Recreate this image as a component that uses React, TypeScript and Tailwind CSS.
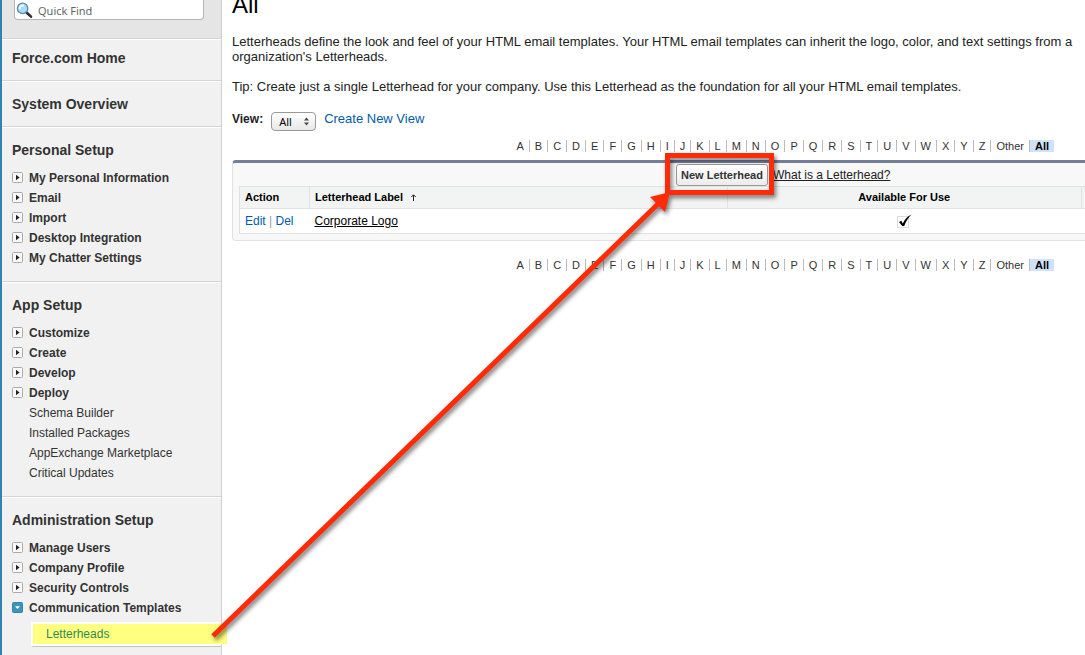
import { ReactNode, useState } from 'react';
import clsx from 'clsx';

type MenuItem = {
  label: string;
  kind?: 'leaf' | 'open';
};

const LETTERS = [...'ABCDEFGHIJKLMNOPQRSTUVWXYZ', 'Other'];

const personalSetup: MenuItem[] = [
  { label: 'My Personal Information' },
  { label: 'Email' },
  { label: 'Import' },
  { label: 'Desktop Integration' },
  { label: 'My Chatter Settings' },
];

const appSetup: MenuItem[] = [
  { label: 'Customize' },
  { label: 'Create' },
  { label: 'Develop' },
  { label: 'Deploy' },
  { label: 'Schema Builder', kind: 'leaf' },
  { label: 'Installed Packages', kind: 'leaf' },
  { label: 'AppExchange Marketplace', kind: 'leaf' },
  { label: 'Critical Updates', kind: 'leaf' },
];

const adminSetup: MenuItem[] = [
  { label: 'Manage Users' },
  { label: 'Company Profile' },
  { label: 'Security Controls' },
  { label: 'Communication Templates', kind: 'open' },
];

function Toggle({ open }: { open: boolean }) {
  return (
    <svg className="mb-px size-[11px] shrink-0" viewBox="0 0 11 11" aria-hidden="true">
      <rect
        x="0.5"
        y="0.5"
        width="10"
        height="10"
        rx="1"
        fill={open ? '#3f94bb' : '#f8f8f8'}
        stroke={open ? '#2f84ab' : '#a9a9a9'}
      />
      {open ? (
        <path d="M3 4.2h5L5.5 7z" fill="#fff" />
      ) : (
        <path d="M4 2.8v5.4L7.6 5.5z" fill="#222" />
      )}
    </svg>
  );
}

function Magnifier() {
  return (
    <svg className="absolute top-[2px] left-[2px] size-[17px]" viewBox="0 0 17 17" aria-hidden="true">
      <path d="M10.8 10.8l4.2 3.8" stroke="#2b2b33" strokeWidth="2.6" strokeLinecap="round" />
      <circle cx="6.6" cy="6.4" r="5.2" fill="#a9dcf8" stroke="#5b87b0" strokeWidth="1.3" />
      <path d="M3.6 6.4a3.3 3.3 0 0 1 3.6-3" stroke="#eefaff" strokeWidth="2" fill="none" strokeLinecap="round" />
    </svg>
  );
}

function Section({ title, items, children }: { title: string; items?: MenuItem[]; children?: ReactNode }) {
  return (
    <section className="border-t border-b border-t-white border-b-[#d4d4d4] pt-3 pb-3 pl-[10px] last:border-b-0">
      <h2 className="text-sm leading-5 font-bold">{title}</h2>
      {items && (
        <ul className="mt-2 mb-px">
          {items.map((item) => (
            <li key={item.label} className="flex h-5 items-center gap-[6px]">
              {item.kind === 'leaf' ? <span className="w-[11px]" /> : <Toggle open={item.kind === 'open'} />}
              <a href="#" className={clsx('text-[12px] leading-5', item.kind !== 'leaf' && 'font-bold')}>
                {item.label}
              </a>
            </li>
          ))}
        </ul>
      )}
      {children}
    </section>
  );
}

function Rolodex({ label }: { label: string }) {
  return (
    <nav aria-label={label} className="flex justify-end pr-[31px] text-[11px] leading-3 text-[#333]">
      {LETTERS.map((letter) => (
        <a key={letter} href="#" className="border-r border-[#bbb] px-[5px]">
          {letter}
        </a>
      ))}
      <a href="#" className="bg-[#cfe2fb] px-[5px] font-bold text-black">
        All
      </a>
    </nav>
  );
}

// Red frame round the button, and the arrow that leads to it from the menu
function Callout() {
  return (
    <svg className="pointer-events-none absolute top-0 -left-0.5 size-full overflow-visible" aria-hidden="true">
      <g style={{ filter: 'drop-shadow(2px 3px 2px rgb(0 0 0 / 0.5))' }}>
        <rect x="667.5" y="155.5" width="104" height="37" fill="none" stroke="#ff2b06" strokeWidth="5" />
        <path d="M213 636L659 203" stroke="#ff2b06" strokeWidth="5" fill="none" />
        <path d="M650 197l20-5-5 20z" fill="#ff2b06" />
      </g>
    </svg>
  );
}

export default function App() {
  const [quickFind, setQuickFind] = useState('');

  return (
    <div
      className="relative flex min-h-screen overflow-hidden border-l-2 border-[#2f84ab] bg-white text-[#222]"
      style={{ fontFamily: '"Liberation Sans", Arial, sans-serif' }}
    >
      <aside className="flex w-[220px] shrink-0 flex-col border-r border-[#cfcfcf] bg-[#f1f1f1] text-[#333]">
        <div className="border-b border-[#d4d4d4] bg-[#e5e5e5] pr-[17px] pb-[18px] pl-3">
          <div className="relative">
            <input
              type="text"
              aria-label="Quick Find"
              placeholder="Quick Find"
              value={quickFind}
              onChange={(event) => setQuickFind(event.target.value)}
              className="block h-5 w-full rounded-b border border-t-0 border-[#b5b5b5] bg-white pt-[2px] pl-[23px] font-['Noto_Sans',sans-serif] text-[11px] placeholder:text-[#666]"
            />
            <Magnifier />
          </div>
        </div>
        <section className="border-t border-b border-t-white border-b-[#d4d4d4] pt-2 pb-3 pl-[10px]">
          <h2 className="text-sm leading-5 font-bold">Force.com Home</h2>
        </section>
        <Section title="System Overview" />
        <Section title="Personal Setup" items={personalSetup} />
        <Section title="App Setup" items={appSetup} />
        <Section title="Administration Setup" items={adminSetup}>
          <div className="relative ml-[19px] pt-[3px]">
            <div className="border-t-2 border-b border-l-2 border-white border-b-[#c4c4c4] bg-white pb-[2px]">
              <a href="#" className="-mr-[6px] block bg-[#ffff80] pl-[13px] text-[12px] leading-5 text-[#2e8b57]">
                Letterheads
              </a>
            </div>
          </div>
        </Section>
      </aside>

      <main className="min-w-0 flex-1 pl-[10px]">
        <h1 className="-mt-[3px] text-2xl leading-4 text-black">All</h1>
        <div className="mt-[21px] text-[13px] leading-[15px] whitespace-nowrap">
          <p>
            Letterheads define the look and feel of your HTML email templates. Your HTML email templates can inherit the logo, color, and text settings from a
            <br />
            organization's Letterheads.
          </p>
          <p className="mt-[15px]">
            Tip: Create just a single Letterhead for your company. Use this Letterhead as the foundation for all your HTML email templates.
          </p>
        </div>

        <div className="mt-[18px] flex items-start text-[12px] leading-[14px]">
          <label htmlFor="view" className="mr-2 font-bold">
            View:
          </label>
          <div className="relative">
            <select
              id="view"
              className="block h-[19px] w-[45px] appearance-none rounded border border-[#999] bg-linear-to-b from-white to-[#e8e8e8] pl-[7px] font-['Noto_Sans',sans-serif] text-[11px] text-black"
            >
              <option>All</option>
            </select>
            <svg className="pointer-events-none absolute top-[5px] right-[6px] h-[9px] w-[7px]" viewBox="0 0 7 9" aria-hidden="true">
              <path d="M1 3.4L3.5 0.4 6 3.4zM1 5.6l2.5 3 2.5-3z" fill="#444" />
            </svg>
          </div>
          <a href="#" className="ml-2 text-[13px] text-[#015ba7]">
            Create New View
          </a>
        </div>

        <div className="mt-[9px] mb-2">
          <Rolodex label="Filter by letter" />
        </div>

        <div className="rounded-l border-t-[3px] border-b border-l border-[#e0e3e5] border-t-[#747e96] bg-[#f8f8f8] pb-[6px] pl-[6px]">
          <div className="flex items-center gap-[5px] pt-px pl-[437px]">
            <button
              type="button"
              className="h-[22px] w-[92px] shrink-0 rounded-[3px] border border-[#999] bg-linear-to-b from-white to-[#ececec] text-[11px] font-bold whitespace-nowrap text-[#333]"
            >
              New Letterhead
            </button>
            <a href="#" className="text-[12px] whitespace-nowrap underline">
              What is a Letterhead?
            </a>
          </div>
          <table className="w-full table-fixed border-collapse text-[12px]">
            <colgroup>
              <col className="w-[70px]" />
              <col className="w-[418px]" />
              <col />
              <col className="w-1" />
            </colgroup>
            <thead>
              <tr className="h-[22px] border border-r-0 border-[#e0e3e5] bg-[#f2f3f3] text-[11px] text-black">
                <th className="border-r border-[#e0e3e5] pl-[5px] text-left">Action</th>
                <th className="border-r border-[#e0e3e5] pl-[5px] text-left">
                  <span className="flex items-center gap-2">
                    Letterhead Label
                    <svg className="h-[7px] w-[5px]" viewBox="0 0 5 7" aria-label="Sorted ascending">
                      <path d="M2.5 7V1M0.3 3L2.5 0.8 4.7 3" stroke="#222" fill="none" />
                    </svg>
                  </span>
                </th>
                <th className="border-r border-[#e0e3e5]">Available For Use</th>
                <th />
              </tr>
            </thead>
            <tbody>
              <tr className="h-[25px] border border-r-0 border-[#e0e3e5] bg-white">
                <td className="pl-[5px] text-[#999]">
                  <a href="#" className="text-[#015ba7]">Edit</a>
                  {' | '}
                  <a href="#" className="text-[#015ba7]">Del</a>
                </td>
                <td className="pl-[5px]">
                  <a href="#" className="text-black underline">Corporate Logo</a>
                </td>
                <td>
                  <svg className="mx-auto h-[15px] w-4" viewBox="0 0 16 15" role="img" aria-label="Checked">
                    <rect x="1.5" y="2.5" width="11" height="11" fill="none" stroke="#bbb" strokeDasharray="1 1" />
                    <path d="M3 8l2.300-1.200 1.500 2.600C8.800 5.600 11.500 2.200 15.500 0.600c-3 3-5.400 6.400-7.300 11.400H6.200z" fill="#000" />
                  </svg>
                </td>
                <td />
              </tr>
            </tbody>
          </table>
        </div>

        <div className="mt-[18px]">
          <Rolodex label="Filter by letter, below the list" />
        </div>
      </main>

      <Callout />
    </div>
  );
}
